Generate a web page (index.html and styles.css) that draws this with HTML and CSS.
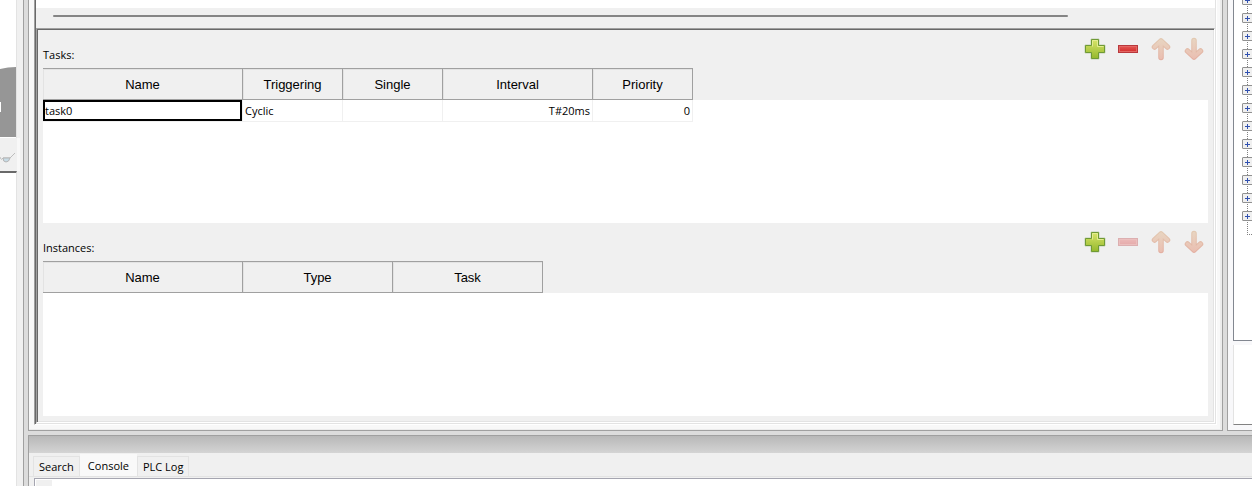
FILE: index.html
```html
<!DOCTYPE html>
<html lang="en">
  <head>
    <meta charset="UTF-8" />
    <meta name="viewport" content="width=device-width, initial-scale=1.0" />
    <title>Resource Editor</title>
    <link rel="stylesheet" href="styles.css">
  </head>
  <body>
    <!-- Icon shapes shared by both toolbars -->
    <svg class="defs" width="0" height="0" aria-hidden="true">
      <defs>
        <linearGradient id="green" x1="0" y1="0" x2="0" y2="1">
          <stop offset="0" stop-color="#d9e56b" />
          <stop offset="1" stop-color="#94b82c" />
        </linearGradient>
        <linearGradient id="red" x1="0" y1="0" x2="0" y2="1">
          <stop offset="0" stop-color="#e25450" />
          <stop offset="1" stop-color="#d42f2f" />
        </linearGradient>
        <linearGradient id="peach" gradientUnits="userSpaceOnUse" x1="0" y1="1" x2="0" y2="23">
          <stop offset="0" stop-color="#e8d6c2" />
          <stop offset="1" stop-color="#eabdb0" />
        </linearGradient>
        <linearGradient id="peach-edge" gradientUnits="userSpaceOnUse" x1="0" y1="1" x2="0" y2="23">
          <stop offset="0" stop-color="#e2c9b1" />
          <stop offset="1" stop-color="#e3aea0" />
        </linearGradient>
        <symbol id="icon-add" viewBox="0 0 24 24">
          <path d="M8 2h8v6h6v8h-6v6H8v-6H2V8h6z" fill="#c3d0b4" stroke="#c3d0b4" stroke-width="1" stroke-linejoin="round" />
          <path d="M8.500 2.500h7v6h6v7h-6v6h-7v-6h-6v-7h6z" fill="url(#green)" stroke="#6f9a35" stroke-linejoin="round" />
          <path d="M9.500 9.500v-6h5v6h6" fill="none" stroke="#e4ed91" />
        </symbol>
        <symbol id="icon-remove" viewBox="0 0 24 24">
          <rect x="2" y="8" width="20" height="8" fill="#b8383c" />
          <rect x="3.500" y="9.500" width="17" height="5" fill="url(#red)" stroke="#e36663" />
        </symbol>
        <symbol id="icon-up" viewBox="0 0 24 24">
          <g fill="none" stroke-linecap="round" stroke-linejoin="round">
            <path d="M12 4v16.500M5.500 10L12 4l6.500 6" stroke="url(#peach-edge)" stroke-width="5.500" />
            <path d="M12 4v16.500M5.500 10L12 4l6.500 6" stroke="url(#peach)" stroke-width="3.500" />
          </g>
        </symbol>
        <symbol id="icon-down" viewBox="0 0 24 24">
          <g fill="none" stroke-linecap="round" stroke-linejoin="round">
            <path d="M12 20V3.500M5.500 14L12 20l6.500-6" stroke="url(#peach-edge)" stroke-width="5.500" />
            <path d="M12 20V3.500M5.500 14L12 20l6.500-6" stroke="url(#peach)" stroke-width="3.500" />
          </g>
        </symbol>
      </defs>
    </svg>

    <div class="app">
      <!-- Left panel -->
      <aside class="sidebar">
        <div class="sidebar-view">
          <svg width="16" height="70" viewBox="0 0 16 70">
            <path d="M0 2Q8 0 16 0V70H0z" fill="#969696" />
            <rect x="0" y="35" width="1" height="10" fill="#fff" />
          </svg>
        </div>
        <button class="watch-btn" aria-label="Watch">
          <svg width="16" height="14" viewBox="0 0 16 14">
            <path d="M0 5q1 4 3 1h7L15 1" fill="none" stroke="#bdbdbd" />
            <path d="M3 6h7q-1 4-4 4T3 6z" fill="#c7dbe5" stroke="#b5b5b5" />
          </svg>
        </button>
        <div class="sidebar-list"></div>
      </aside>

      <div class="workspace">
        <div class="top-row">
          <!-- Editor -->
          <main class="editor-pane">
            <div class="editor sunken">
              <div class="variables"></div>
              <div class="scroll-track"><div class="scroll-thumb"></div></div>
              <div class="resource sunken">
                <section class="section">
                  <div class="section-header">
                    <h2>Tasks:</h2>
                    <div class="tools">
                      <button aria-label="Add task"><svg><use href="#icon-add" /></svg></button>
                      <button aria-label="Remove task"><svg><use href="#icon-remove" /></svg></button>
                      <button aria-label="Move task up"><svg><use href="#icon-up" /></svg></button>
                      <button aria-label="Move task down"><svg><use href="#icon-down" /></svg></button>
                    </div>
                  </div>
                  <div class="grid">
                    <table>
                      <thead>
                        <tr>
                          <th class="col-lg">Name</th>
                          <th class="col-sm">Triggering</th>
                          <th class="col-sm">Single</th>
                          <th class="col-md">Interval</th>
                          <th class="col-sm">Priority</th>
                        </tr>
                      </thead>
                      <tbody>
                        <tr>
                          <td class="selected">task0</td>
                          <td>Cyclic</td>
                          <td></td>
                          <td class="right">T#20ms</td>
                          <td class="right">0</td>
                        </tr>
                      </tbody>
                    </table>
                  </div>
                </section>

                <section class="section">
                  <div class="section-header">
                    <h2>Instances:</h2>
                    <div class="tools">
                      <button aria-label="Add instance"><svg><use href="#icon-add" /></svg></button>
                      <button class="faded" aria-label="Remove instance"><svg><use href="#icon-remove" /></svg></button>
                      <button aria-label="Move instance up"><svg><use href="#icon-up" /></svg></button>
                      <button aria-label="Move instance down"><svg><use href="#icon-down" /></svg></button>
                    </div>
                  </div>
                  <div class="grid">
                    <table>
                      <thead>
                        <tr>
                          <th class="col-lg">Name</th>
                          <th class="col-md">Type</th>
                          <th class="col-md">Task</th>
                        </tr>
                      </thead>
                    </table>
                  </div>
                </section>
              </div>
            </div>
          </main>

          <!-- Library tree -->
          <aside class="library-pane">
            <ul class="tree">
              <li></li><li></li><li></li><li></li><li></li><li></li><li></li>
              <li></li><li></li><li></li><li></li><li></li><li></li>
              <li class="leaf"></li>
            </ul>
            <div class="description"></div>
          </aside>
        </div>

        <!-- Log area -->
        <div class="bottom-pane">
          <div class="caption"></div>
          <div class="tabs" role="tablist">
            <button class="tab" role="tab">Search</button>
            <button class="tab active" role="tab" aria-selected="true">Console</button>
            <button class="tab" role="tab">PLC Log</button>
          </div>
          <div class="console"><div class="gutter"></div></div>
        </div>
      </div>
    </div>
  </body>
</html>
```

FILE: styles.css
```css
* {
  box-sizing: border-box;
}
body {
  margin: 0;
  font-family: "Open Sans", "Noto Sans", sans-serif;
  font-size: 11px;
  color: #000;
  background-color: #f0f0f0;
}
button {
  margin: 0;
  padding: 0;
  border: none;
  background: none;
  font: inherit;
  color: inherit;
}
.defs {
  position: absolute;
}
.app {
  display: flex;
  height: 100vh;
  overflow: hidden;
}

/* Left panel */
.sidebar {
  display: flex;
  flex-direction: column;
  width: 24px;
  padding-right: 3px;
  border-right: 1px solid #a0a0a0;
  background-color: #f0f0f0;
}
.sidebar-view {
  display: flex;
  align-items: flex-end;
  height: 138px;
  padding-bottom: 1px;
  margin-right: 3px;
  border-right: 1px solid #e3e3e3;
  background-color: #fff;
}
.sidebar-view svg {
  display: block;
}
.watch-btn {
  height: 33px;
  padding-top: 11px;
  text-align: left;
  border-right: 3px solid #f8f8f8;
}
.sidebar-list {
  flex: 1;
  margin-right: 3px;
  border-top: 2px solid #696969;
  border-right: 1px solid #e3e3e3;
  background-color: #fff;
}

/* Workspace */
.workspace {
  flex: 1;
  display: flex;
  flex-direction: column;
  gap: 4px;
  min-width: 0;
  padding-left: 4px;
  background-color: #dcdcdc;
}
.top-row {
  flex: 1;
  display: flex;
  gap: 4px;
  min-height: 0;
}
.editor-pane {
  flex: 1;
  display: flex;
  min-width: 0;
  padding: 0 5px 5px;
  border: 1px solid #a0a0a0;
  border-top: none;
  background-color: #f8f8f8;
  box-shadow: inset -2px -1px #ececec;
}
.editor {
  flex: 1;
  display: flex;
  flex-direction: column;
  min-width: 0;
}
.variables {
  height: 8px;
  background-color: #fff;
}
.scroll-track {
  height: 20px;
  padding: 7px 147px 0 17px;
  background-color: #f0f0f0;
}
.scroll-thumb {
  height: 2px;
  border-radius: 1px;
  background-color: #858585;
}
.resource {
  flex: 1;
  display: flex;
  flex-direction: column;
  min-height: 0;
  background-color: #f0f0f0;
}
/* two-tone bevel: outer line, then inner line */
.sunken {
  border: 1px solid;
  border-color: #a0a0a0 #fff #fff #a0a0a0;
}
.editor.sunken {
  border-top: none;
  padding: 0 1px 1px;
  box-shadow: inset 1px 0 #696969, inset -1px -1px #e3e3e3;
}
.resource.sunken {
  padding: 1px 6px 6px;
  box-shadow: inset 1px 1px #696969, inset -1px -1px #e3e3e3;
}

/* Sections */
.section {
  flex: 1;
  display: flex;
  flex-direction: column;
  min-height: 0;
}
.section-header {
  display: flex;
  justify-content: space-between;
  height: 38px;
  padding-right: 2px;
}
.section-header h2 {
  margin: 16px 0 0;
  font-size: 11px;
  line-height: 18px;
  font-weight: normal;
}
.tools {
  display: flex;
  gap: 9px;
  padding-top: 7px;
}
.tools button,
.tools svg {
  display: block;
  width: 24px;
  height: 24px;
}
.tools .faded {
  opacity: 0.35;
}
.grid {
  flex: 1;
  background: linear-gradient(#f0f0f0 32px, #fff 32px);
}
table {
  table-layout: fixed;
  border-collapse: separate;
  border-spacing: 0;
}
th {
  height: 32px;
  padding: 0;
  border-top: 1px solid #a0a0a0;
  border-right: 1px solid #a0a0a0;
  border-bottom: 1px solid #a0a0a0;
  box-shadow: inset 1px 1px #e3e3e3;
  font-family: "Liberation Sans", Arial, sans-serif;
  font-size: 13px;
  font-weight: normal;
}
.col-lg {
  width: 200px;
}
.col-md {
  width: 150px;
}
.col-sm {
  width: 100px;
}
td {
  height: 22px;
  padding: 0 2px;
  border-right: 1px solid #f0f0f0;
  border-bottom: 1px solid #f0f0f0;
  line-height: 18px;
}
td.selected {
  box-shadow: inset 0 0 0 2px #000;
}
td.right {
  text-align: right;
}

/* Library tree */
.library-pane {
  display: flex;
  flex-direction: column;
  gap: 4px;
  width: 25px;
  padding: 0 0 5px 5px;
  border-left: 1px solid #a0a0a0;
  border-bottom: 1px solid #a0a0a0;
  background-color: #f8f8fa;
  overflow: hidden;
}
.tree {
  flex: 1;
  min-height: 0;
  margin: 0;
  padding: 0 0 0 9px;
  list-style: none;
  border-left: 1px solid #828790;
  border-bottom: 1px solid #828790;
  background-color: #fff;
  overflow: hidden;
}
.tree li {
  display: flex;
  flex-direction: column;
  align-items: center;
  width: 9px;
  height: 18px;
}
.tree li:first-child {
  margin-top: -5px;
}
.tree li::before {
  content: "";
  width: 9px;
  height: 9px;
  border: 1px solid #919191;
  border-radius: 1px;
  background:
    linear-gradient(#3050b0, #3050b0) center / 5px 1px no-repeat,
    linear-gradient(#3050b0, #3050b0) center / 1px 5px no-repeat,
    #f0f0f0;
}
.tree li::after {
  content: "";
  width: 1px;
  height: 9px;
  background: repeating-linear-gradient(#fff 0 1px, #808080 1px 2px);
}
.tree .leaf::before {
  width: 1px;
  height: 5px;
  border: none;
  background: repeating-linear-gradient(#fff 0 1px, #808080 1px 2px);
}
.tree .leaf::after {
  width: 5px;
  height: 1px;
  margin-left: 4px;
  background: repeating-linear-gradient(90deg, #808080 0 1px, #fff 1px 2px);
}
.description {
  height: 80px;
  border-left: 1px solid #e3e3e3;
  border-bottom: 1px solid #828282;
  background-color: #fff;
}

/* Log area */
.bottom-pane {
  display: flex;
  flex-direction: column;
  height: 51px;
  border-top: 1px solid #a0a0a0;
  border-left: 1px solid #a0a0a0;
  background-color: #f0f0f0;
}
.caption {
  height: 17px;
  background: linear-gradient(#b8b8b8, #d4d4d4);
}
.tabs {
  display: flex;
  align-items: flex-end;
  height: 24px;
  padding-left: 4px;
  border-bottom: 1px solid #e3e3e3;
}
.tab {
  height: 20px;
  padding: 0 5px;
  border: 1px solid #e3e3e3;
  border-bottom: none;
  line-height: 18px;
}
.tab.active {
  height: 22px;
  padding: 0 7px;
  border-color: #f9f9f9;
  background-color: #f9f9f9;
}
.console {
  flex: 1;
  margin: 1px 0 0 5px;
  padding: 1px 0 0 1px;
  border-top: 1px solid #a5a5b0;
  border-left: 1px solid #a5a5b0;
  background-color: #fff;
}
.gutter {
  width: 16px;
  height: 100%;
  background-color: #f0f0f0;
}
```
